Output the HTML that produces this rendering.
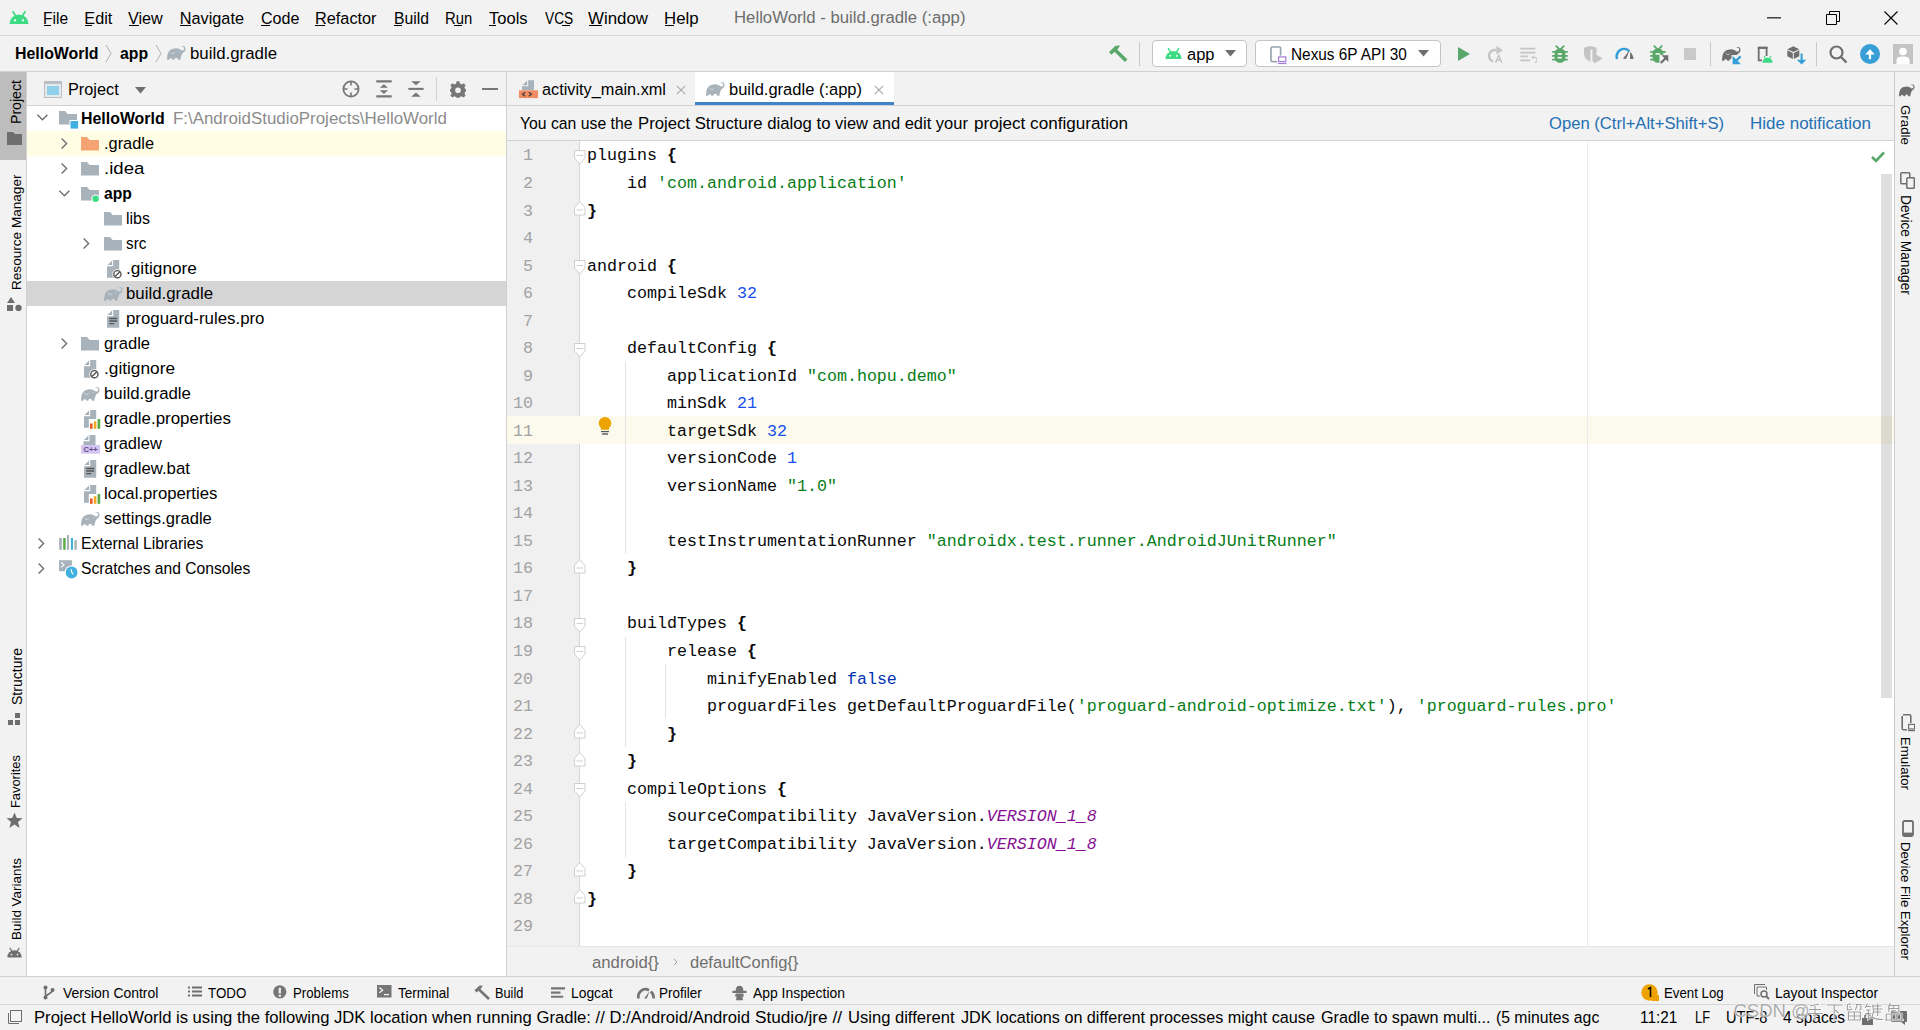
<!DOCTYPE html><html><head><meta charset="utf-8"><style>
html,body{margin:0;padding:0;}
body{width:1920px;height:1030px;overflow:hidden;position:relative;background:#f2f2f2;font-family:"Liberation Sans",sans-serif;}
.t{position:absolute;white-space:nowrap;line-height:1;}
.c{position:absolute;left:587px;white-space:pre;font-family:"Liberation Mono",monospace;font-size:16.67px;line-height:20px;color:#080808;}
.s{color:#067d17}.n{color:#1750eb}.k{color:#0033b3}.i{color:#871094;font-style:italic}.b{font-weight:bold}
.ln{position:absolute;left:493px;width:40px;text-align:right;font-family:"Liberation Mono",monospace;font-size:16.67px;line-height:20px;color:#a2a2a2;}
.u{position:absolute;height:1px;background:#000;}
</style></head><body>
<svg style="position:absolute;left:9px;top:11px;" width="20" height="13" viewBox="0 0 20 13"><path d="M0.5 13 A9.5 9.5 0 0 1 19.5 13 Z" fill="#3ddc84"/><path d="M4 0.8 L6.6 5 M16 0.8 L13.4 5" stroke="#3ddc84" stroke-width="1.7" stroke-linecap="round"/><circle cx="6" cy="9.3" r="1.15" fill="#fff"/><circle cx="14" cy="9.3" r="1.15" fill="#fff"/></svg>
<div class="t" style="left:43.30px;top:10px;font-size:16.25px;color:#000;transform:scaleX(0.9569);transform-origin:0 0;">File</div>
<div class="t" style="left:84.30px;top:10px;font-size:16.25px;color:#000;">Edit</div>
<div class="t" style="left:128.30px;top:10px;font-size:16.25px;color:#000;transform:scaleX(0.9964);transform-origin:0 0;">View</div>
<div class="t" style="left:179.80px;top:10px;font-size:16.25px;color:#000;">Navigate</div>
<div class="t" style="left:260.55px;top:10px;font-size:16.25px;color:#000;transform:scaleX(0.9904);transform-origin:0 0;">Code</div>
<div class="t" style="left:314.70px;top:10px;font-size:16.25px;color:#000;transform:scaleX(1.0020);transform-origin:0 0;">Refactor</div>
<div class="t" style="left:393.70px;top:10px;font-size:16.25px;color:#000;transform:scaleX(0.9689);transform-origin:0 0;">Build</div>
<div class="t" style="left:444.90px;top:10px;font-size:16.25px;color:#000;transform:scaleX(0.9126);transform-origin:0 0;">Run</div>
<div class="t" style="left:488.80px;top:10px;font-size:16.25px;color:#000;transform:scaleX(1.0165);transform-origin:0 0;">Tools</div>
<div class="t" style="left:544.80px;top:10px;font-size:16.25px;color:#000;transform:scaleX(0.8464);transform-origin:0 0;">VCS</div>
<div class="t" style="left:588.30px;top:10px;font-size:16.25px;color:#000;transform:scaleX(1.0367);transform-origin:0 0;">Window</div>
<div class="t" style="left:664.30px;top:10px;font-size:16.25px;color:#000;transform:scaleX(1.0337);transform-origin:0 0;">Help</div>
<div style="position:absolute;left:44px;top:25px;width:7px;height:1px;background:#000"></div>
<div style="position:absolute;left:85px;top:25px;width:7px;height:1px;background:#000"></div>
<div style="position:absolute;left:129px;top:25px;width:10px;height:1px;background:#000"></div>
<div style="position:absolute;left:180px;top:25px;width:11px;height:1px;background:#000"></div>
<div style="position:absolute;left:261px;top:25px;width:9px;height:1px;background:#000"></div>
<div style="position:absolute;left:315px;top:25px;width:10px;height:1px;background:#000"></div>
<div style="position:absolute;left:394px;top:25px;width:8px;height:1px;background:#000"></div>
<div style="position:absolute;left:454px;top:25px;width:8px;height:1px;background:#000"></div>
<div style="position:absolute;left:489px;top:25px;width:7px;height:1px;background:#000"></div>
<div style="position:absolute;left:562px;top:25px;width:8px;height:1px;background:#000"></div>
<div style="position:absolute;left:589px;top:25px;width:13px;height:1px;background:#000"></div>
<div style="position:absolute;left:665px;top:25px;width:9px;height:1px;background:#000"></div>
<div class="t" style="left:733.80px;top:9px;font-size:16.25px;color:#6d6d6d;transform:scaleX(1.0306);transform-origin:0 0;">HelloWorld - build.gradle (:app)</div>
<svg style="position:absolute;left:1767px;top:17px;" width="14" height="2" viewBox="0 0 14 2"><rect y="0.3" width="14" height="1.1" fill="#000"/></svg>
<svg style="position:absolute;left:1826px;top:11px;" width="14" height="14" viewBox="0 0 14 14"><path d="M0.5 3.5 H10.5 V13.5 H0.5 Z M3.5 3.5 V0.5 H13.5 V10.5 H10.5" stroke="#000" stroke-width="1" fill="none"/></svg>
<svg style="position:absolute;left:1884px;top:11px;" width="14" height="14" viewBox="0 0 14 14"><path d="M0.5 0.5 L13.5 13.5 M13.5 0.5 L0.5 13.5" stroke="#000" stroke-width="1.1"/></svg>
<div style="position:absolute;left:0px;top:35px;width:1920px;height:1px;background:#d9d9d9"></div>
<div class="t" style="left:14.90px;top:45px;font-size:16.25px;color:#000;font-weight:bold;transform:scaleX(0.9778);transform-origin:0 0;">HelloWorld</div>
<svg style="position:absolute;left:105px;top:44px;" width="7" height="19" viewBox="0 0 7 19"><path d="M1 1 L6 9.5 L1 18" stroke="#b0b0b0" stroke-width="1" fill="none"/></svg>
<div class="t" style="left:119.60px;top:45px;font-size:16.25px;color:#000;font-weight:bold;transform:scaleX(0.9732);transform-origin:0 0;">app</div>
<svg style="position:absolute;left:155px;top:44px;" width="7" height="19" viewBox="0 0 7 19"><path d="M1 1 L6 9.5 L1 18" stroke="#b0b0b0" stroke-width="1" fill="none"/></svg>
<svg style="position:absolute;left:167px;top:46px;" width="19" height="14" viewBox="0 0 19 14"><path d="M0.1 13.8 C0 10.5 0.6 7 2.2 5 C3.8 3 6.5 2.2 9.3 2.2 C11.5 2.2 13 3.2 14.4 4.3 C15.3 4.9 16.6 4.6 17.1 3.3 C17.5 2 16.6 0.6 15.2 0.6 C14.5 0.6 14 0.9 13.6 1.3 C13.9 0.5 15 -0.1 16.2 0 C17.6 0.1 18.6 1.4 18.5 3.2 C18.4 5 16.8 6.4 15.4 7.3 C14.5 8.5 13.7 11 13.4 13.8 H11.1 C10.9 12.6 10.1 11.8 9.1 11.8 C8.1 11.8 7.5 12.6 7.3 13.8 H5.5 C5.3 12.8 4.6 12.2 3.8 12.2 C3 12.2 2.2 12.8 2 13.8 Z" fill="#a7b2ba"/><path d="M3.6 5.6 C4.2 7 5.2 7.6 6.3 7.6 C7 7.6 7.5 7.2 7.9 6.3" stroke="#fff" stroke-width="0.9" fill="none" opacity="0.55"/><circle cx="12.3" cy="5.6" r="0.6" fill="#fff" opacity="0.4"/></svg>
<div class="t" style="left:189.90px;top:45px;font-size:16.25px;color:#000;transform:scaleX(1.0357);transform-origin:0 0;">build.gradle</div>
<svg style="position:absolute;left:1108px;top:44px;" width="21" height="20" viewBox="0 0 21 20"><path d="M7 5.8 L18.2 16.8" stroke="#59a869" stroke-width="3.6"/><path d="M1 8.1 L7.6 1.8 L12.2 1.4 L10.1 4.5 L3.4 10.8 Z" fill="#59a869"/></svg>
<div style="position:absolute;left:1139px;top:42px;width:1px;height:24px;background:#c9c9c9"></div>
<div style="position:absolute;left:1152px;top:40px;width:93px;height:25px;background:#fff;border:1px solid #c4c4c4;border-radius:4px"></div>
<svg style="position:absolute;left:1165px;top:48px;" width="17" height="11" viewBox="0 0 20 13"><path d="M0.5 13 A9.5 9.5 0 0 1 19.5 13 Z" fill="#3ddc84"/><path d="M4 0.8 L6.6 5 M16 0.8 L13.4 5" stroke="#3ddc84" stroke-width="1.7" stroke-linecap="round"/><circle cx="6" cy="9.3" r="1.15" fill="#fff"/><circle cx="14" cy="9.3" r="1.15" fill="#fff"/></svg>
<div class="t" style="left:1187.30px;top:46px;font-size:16.25px;color:#000;transform:scaleX(1.0138);transform-origin:0 0;">app</div>
<svg style="position:absolute;left:1225px;top:50px;" width="11" height="7" viewBox="0 0 11 7"><path d="M0 0 H11 L5.5 6.5 Z" fill="#6e6e6e"/></svg>
<div style="position:absolute;left:1255px;top:40px;width:184px;height:25px;background:#fff;border:1px solid #c4c4c4;border-radius:4px"></div>
<svg style="position:absolute;left:1270px;top:46px;" width="17" height="19" viewBox="0 0 17 19"><rect x="1" y="1" width="9.6" height="14.6" rx="1.2" stroke="#9aa7b0" stroke-width="1.7" fill="none"/><rect x="7.2" y="9.6" width="10" height="9" fill="#fff"/><rect x="8.6" y="10.9" width="7.2" height="4.6" stroke="#a77ed8" stroke-width="1.2" fill="none"/><rect x="7.8" y="16.8" width="8.8" height="1.3" fill="#a77ed8"/></svg>
<div class="t" style="left:1291.05px;top:46px;font-size:16.25px;color:#000;transform:scaleX(0.9449);transform-origin:0 0;">Nexus 6P API 30</div>
<svg style="position:absolute;left:1418px;top:50px;" width="11" height="7" viewBox="0 0 11 7"><path d="M0 0 H11 L5.5 6.5 Z" fill="#6e6e6e"/></svg>
<svg style="position:absolute;left:1457px;top:46px;" width="14" height="16" viewBox="0 0 14 16"><path d="M1 1 L13 8 L1 15 Z" fill="#59a869"/></svg>
<svg style="position:absolute;left:1486px;top:45px;" width="18" height="19" viewBox="0 0 18 19"><path d="M10.5 5.2 A5.6 5.6 0 1 0 7.2 16.4" stroke="#c4c4c4" stroke-width="2.4" fill="none"/><path d="M10.4 0.8 L16.8 5.2 L10.4 9.6 Z" fill="#c4c4c4"/><path d="M9.6 17.8 L12.7 10.4 L15.8 17.8 M10.8 15.2 H14.6" stroke="#c4c4c4" stroke-width="1.5" fill="none"/></svg>
<svg style="position:absolute;left:1520px;top:46px;" width="17" height="18" viewBox="0 0 17 18"><path d="M0.4 2.6 H15.3 M0.4 6.6 H15.3 M0.4 10.4 H7.9 M0.4 14.3 H10.2" stroke="#c4c4c4" stroke-width="1.8"/><path d="M13.4 11.3 H14.6 A2.6 2.6 0 0 1 14.6 16.5" stroke="#c4c4c4" stroke-width="1.3" fill="none"/><path d="M11.2 11.3 L13.6 9.4 V13.2 Z" fill="#c4c4c4"/></svg>
<svg style="position:absolute;left:1552px;top:45px;" width="16" height="19" viewBox="0 0 16 19"><path d="M8 3.6 C11.5 3.6 13.4 6 13.4 9 V12.5 C13.4 15.5 11.2 17.8 8 17.8 C4.8 17.8 2.6 15.5 2.6 12.5 V9 C2.6 6 4.5 3.6 8 3.6 Z" fill="#59a869"/><path d="M0.9 6.8 H15.1 M0.9 10.9 H15.1 M0.9 14.6 H15.1 M4.3 1.2 L7 3.9 M11.7 1.2 L9 3.9" stroke="#59a869" stroke-width="1.8" stroke-linecap="round"/><rect x="5.6" y="8.2" width="4.4" height="1.5" fill="#fff"/><rect x="5.6" y="11.9" width="4.4" height="1.5" fill="#fff"/></svg>
<svg style="position:absolute;left:1584px;top:46px;" width="19" height="18" viewBox="0 0 19 18"><path d="M6 0.3 C8 0.3 10.5 1 12.5 1.8 V8 L10 9.2 V15.5 C8.5 15.5 7 15.4 6 15.5 C2.5 14 0 11 0 7.5 V1.8 C2 1 4 0.3 6 0.3 Z" fill="#c4c4c4"/><rect x="6.4" y="3.6" width="2" height="12" fill="#f2f2f2"/><path d="M10 7.2 L18.7 12.5 L10 17.7 Z" fill="#c4c4c4"/></svg>
<svg style="position:absolute;left:1615px;top:47px;" width="20" height="13" viewBox="0 0 20 13"><path d="M2.2 12 A7.3 7.3 0 0 1 14.3 4.3" stroke="#389fd6" stroke-width="2.6" fill="none"/><path d="M8 11.5 L14.9 2.8 L11 12 Z" fill="#6e6e6e"/><path d="M15.2 4.7 C17 6.5 18.2 9 18.5 12 H15 Z" fill="#6e6e6e"/></svg>
<svg style="position:absolute;left:1650px;top:45px;" width="19" height="19" viewBox="0 0 19 19"><path d="M8 3.6 C11.5 3.6 13.4 6 13.4 9 V12.5 C13.4 15.5 11.2 17.8 8 17.8 C4.8 17.8 2.6 15.5 2.6 12.5 V9 C2.6 6 4.5 3.6 8 3.6 Z" fill="#59a869"/><path d="M0.9 6.8 H15.1 M0.9 10.9 H15.1 M0.9 14.6 H15.1 M4.3 1.2 L7 3.9 M11.7 1.2 L9 3.9" stroke="#59a869" stroke-width="1.8" stroke-linecap="round"/><rect x="5.6" y="8.2" width="4.4" height="1.5" fill="#fff"/><path d="M9.5 9.8 H19 V19 H9.5 Z" fill="#f2f2f2"/><path d="M10.8 18 L16.6 12.2" stroke="#6e6e6e" stroke-width="2.2"/><path d="M11.5 10.2 H18.3 V17 Z" fill="#6e6e6e"/></svg>
<div style="position:absolute;left:1684px;top:48px;width:12px;height:12px;background:#c9c9c9"></div>
<div style="position:absolute;left:1710px;top:42px;width:1px;height:24px;background:#c9c9c9"></div>
<svg style="position:absolute;left:1721.5px;top:47px;" width="20" height="18" viewBox="0 0 20 18"><path d="M0.1 13.8 C0 10.5 0.6 7 2.2 5 C3.8 3 6.5 2.2 9.3 2.2 C11.5 2.2 13 3.2 14.4 4.3 C15.3 4.9 16.6 4.6 17.1 3.3 C17.5 2 16.6 0.6 15.2 0.6 C14.5 0.6 14 0.9 13.6 1.3 C13.9 0.5 15 -0.1 16.2 0 C17.6 0.1 18.6 1.4 18.5 3.2 C18.4 5 16.8 6.4 15.4 7.3 C14.5 8.5 13.7 11 13.4 13.8 H11.1 C10.9 12.6 10.1 11.8 9.1 11.8 C8.1 11.8 7.5 12.6 7.3 13.8 H5.5 C5.3 12.8 4.6 12.2 3.8 12.2 C3 12.2 2.2 12.8 2 13.8 Z" fill="#6e6e6e"/><path d="M3.6 5.6 C4.2 7 5.2 7.6 6.3 7.6 C7 7.6 7.5 7.2 7.9 6.3" stroke="#fff" stroke-width="0.9" fill="none" opacity="0.6"/><path d="M9.5 8 L20 8 L20 18 L9.5 18 Z" fill="#f2f2f2"/><path d="M18.6 9.4 L13.5 14.3" stroke="#389fd6" stroke-width="2.3"/><path d="M10.6 8.8 V17.2 H19 Z" fill="#389fd6"/></svg>
<svg style="position:absolute;left:1757px;top:46px;" width="17" height="18" viewBox="0 0 17 18"><path d="M1.7 1.8 H9.6 V10 M1.7 1.8 V14.4 H5" stroke="#6e6e6e" stroke-width="1.8" fill="none"/><rect x="0.8" y="0.6" width="9.7" height="2.2" fill="#6e6e6e"/><path d="M5.4 16.8 A5 5 0 0 1 15.6 16.8 Z" fill="#3ddc84"/><path d="M7.3 10.4 L8.5 12.6 M13.7 10.4 L12.5 12.6" stroke="#3ddc84" stroke-width="1.1" stroke-linecap="round"/></svg>
<svg style="position:absolute;left:1786.5px;top:45.5px;" width="20" height="19" viewBox="0 0 20 19"><path d="M6.3 0.3 L12.3 3.2 L6.3 6 L0.3 3.2 Z" fill="#6e6e6e"/><path d="M0.3 4.3 L5.8 7 V13 L0.3 10.3 Z" fill="#6e6e6e"/><path d="M6.8 7 L12.3 4.3 V10.3 L6.8 13 Z" fill="#6e6e6e"/><path d="M14.6 7.5 V14.5" stroke="#389fd6" stroke-width="2.1"/><path d="M9.8 13.8 H19.4 L14.6 18.5 Z" fill="#389fd6"/></svg>
<div style="position:absolute;left:1816px;top:42px;width:1px;height:24px;background:#c9c9c9"></div>
<svg style="position:absolute;left:1829px;top:45px;" width="19" height="19" viewBox="0 0 19 19"><circle cx="7.5" cy="7.5" r="6" stroke="#6e6e6e" stroke-width="2.2" fill="none"/><path d="M12 12 L17.5 17.5" stroke="#6e6e6e" stroke-width="2.4"/></svg>
<svg style="position:absolute;left:1860px;top:44px;" width="20" height="20" viewBox="0 0 20 20"><circle cx="10" cy="10" r="10" fill="#389fd6"/><path d="M10 9.5 V15.2" stroke="#fff" stroke-width="2.2"/><path d="M5.2 10.5 L10 5.2 L14.8 10.5 Z" fill="#fff"/></svg>
<svg style="position:absolute;left:1893px;top:44px;" width="20" height="20" viewBox="0 0 20 20"><rect width="20" height="20" fill="#c4c4c4"/><circle cx="10" cy="7.5" r="3.8" fill="#fff"/><path d="M3.5 20 V16 C3.5 13.5 6 12.5 10 12.5 C14 12.5 16.5 13.5 16.5 16 V20 Z" fill="#fff"/></svg>
<div style="position:absolute;left:0px;top:71px;width:1920px;height:1px;background:#d1d1d1"></div>
<div style="position:absolute;left:26px;top:72px;width:1px;height:904px;background:#d1d1d1"></div>
<div style="position:absolute;left:0px;top:72px;width:26px;height:88px;background:#bdbdbd"></div>
<div class="t" style="left:9.43px;top:124.00px;font-size:14.14px;color:#000;transform:rotate(-90deg);transform-origin:0 0">Project</div>
<svg style="position:absolute;left:7px;top:132px;" width="15" height="13" viewBox="0 0 15 13"><path d="M0 0 H6 L8 2 H15 V13 H0 Z" fill="#6e6e6e"/></svg>
<div class="t" style="left:9.89px;top:289.60px;font-size:13.59px;color:#000;transform:rotate(-90deg);transform-origin:0 0">Resource Manager</div>
<svg style="position:absolute;left:7px;top:297px;" width="15" height="14" viewBox="0 0 15 14"><path d="M4 0 L8 6 H0 Z" fill="#6e6e6e"/><rect x="0" y="8" width="6" height="6" fill="#6e6e6e"/><circle cx="11.5" cy="11" r="3.2" fill="#6e6e6e"/></svg>
<div class="t" style="left:9.51px;top:705.00px;font-size:14.05px;color:#000;transform:rotate(-90deg);transform-origin:0 0">Structure</div>
<svg style="position:absolute;left:8px;top:713px;" width="13" height="13" viewBox="0 0 13 13"><rect x="0" y="7" width="5" height="5" fill="#6e6e6e"/><rect x="7" y="7" width="5" height="5" fill="#6e6e6e"/><rect x="7" y="0" width="5" height="5" fill="#6e6e6e"/></svg>
<div class="t" style="left:10.49px;top:808.00px;font-size:12.89px;color:#000;transform:rotate(-90deg);transform-origin:0 0">Favorites</div>
<svg style="position:absolute;left:6px;top:812px;" width="17" height="17" viewBox="0 0 17 17"><path d="M8.5 0.5 L10.8 6 L16.5 6.3 L12 10 L13.6 16 L8.5 12.6 L3.4 16 L5 10 L0.5 6.3 L6.2 6 Z" fill="#6e6e6e"/></svg>
<div class="t" style="left:10.01px;top:940.00px;font-size:13.45px;color:#000;transform:rotate(-90deg);transform-origin:0 0">Build Variants</div>
<svg style="position:absolute;left:7px;top:947px;" width="15" height="11" viewBox="0 0 20 13"><path d="M0.5 13 A9.5 9.5 0 0 1 19.5 13 Z" fill="#6e6e6e"/><path d="M4 0.8 L6.6 5 M16 0.8 L13.4 5" stroke="#6e6e6e" stroke-width="1.7" stroke-linecap="round"/><circle cx="6" cy="9.3" r="1.15" fill="#f2f2f2"/><circle cx="14" cy="9.3" r="1.15" fill="#f2f2f2"/></svg>
<div style="position:absolute;left:27px;top:105px;width:479px;height:1px;background:#d1d1d1"></div>
<div style="position:absolute;left:506px;top:72px;width:1px;height:904px;background:#d1d1d1"></div>
<svg style="position:absolute;left:44px;top:81px;" width="18" height="17" viewBox="0 0 18 17"><rect x="0.5" y="0.5" width="17" height="16" fill="#e6e9eb" stroke="#b8c0c6"/><rect x="0.5" y="0.5" width="17" height="2.5" fill="#b8c0c6"/><rect x="3" y="5" width="12" height="9" fill="#8fd1ea"/></svg>
<div class="t" style="left:68.05px;top:81px;font-size:16.25px;color:#000;transform:scaleX(1.0025);transform-origin:0 0;">Project</div>
<svg style="position:absolute;left:135px;top:87px;" width="11" height="7" viewBox="0 0 11 7"><path d="M0 0 H11 L5.5 6.5 Z" fill="#6e6e6e"/></svg>
<svg style="position:absolute;left:342px;top:80px;" width="18" height="18" viewBox="0 0 18 18"><circle cx="9" cy="9" r="7.6" stroke="#777" stroke-width="1.8" fill="none"/><path d="M9 1.5 V5.5 M9 12.5 V16.5 M1.5 9 H5.5 M12.5 9 H16.5" stroke="#777" stroke-width="1.6"/></svg>
<svg style="position:absolute;left:376px;top:80px;" width="16" height="18" viewBox="0 0 16 18"><path d="M0.3 1.4 H15.7 M0.3 16.4 H15.7" stroke="#777" stroke-width="2.4"/><path d="M7.9 4.2 L12 7.7 H3.8 Z M7.9 14 L12 10.3 H3.8 Z" fill="#777"/></svg>
<svg style="position:absolute;left:408px;top:80px;" width="16" height="18" viewBox="0 0 16 18"><path d="M0.4 8.9 H15.6" stroke="#777" stroke-width="2.1"/><path d="M3.2 1.2 H12.7 L8 5.3 Z M3.2 16.8 H12.7 L8 12.4 Z" fill="#777"/></svg>
<div style="position:absolute;left:436px;top:77px;width:1px;height:24px;background:#d1d1d1"></div>
<svg style="position:absolute;left:450px;top:80.5px;" width="16" height="17" viewBox="0 0 16 17"><path d="M6.6 0.3 H9.4 L9.9 2.6 L11.6 3.4 L13.6 2.2 L15.6 4.2 L14.4 6.2 L15.2 7.9 L16 8.2 V10.4 L15.2 10.7 L14.4 12.4 L15.6 14.4 L13.6 16.4 L11.6 15.2 L9.9 16 L9.4 16.8 H6.6 L6.1 16 L4.4 15.2 L2.4 16.4 L0.4 14.4 L1.6 12.4 L0.8 10.7 L0 10.4 V8.2 L0.8 7.9 L1.6 6.2 L0.4 4.2 L2.4 2.2 L4.4 3.4 L6.1 2.6 Z" fill="#777"/><circle cx="8" cy="9.3" r="2.8" fill="#f2f2f2"/></svg>
<div style="position:absolute;left:482px;top:87.5px;width:16px;height:2.6px;background:#777"></div>
<div style="position:absolute;left:27px;top:106px;width:479px;height:870px;background:#fff"></div>
<div style="position:absolute;left:27px;top:131px;width:479px;height:25px;background:#fffee4"></div>
<div style="position:absolute;left:27px;top:281px;width:479px;height:25px;background:#d5d5d5"></div>
<svg style="position:absolute;left:37px;top:114px;" width="12" height="8" viewBox="0 0 12 8"><path d="M0.4 0.7 L5.4 5.7 L10.4 0.7" stroke="#6e6e6e" stroke-width="1.4" fill="none"/></svg>
<svg style="position:absolute;left:59px;top:111.3px;" width="21" height="19" viewBox="0 0 21 19"><path d="M0 0 H6 L8.7 2.9 H18 V13.4 H0 Z" fill="#a7b2ba"/><rect x="10.5" y="9" width="9.5" height="9.5" fill="#fff"/><rect x="11.5" y="10" width="7.6" height="7.6" fill="#3fb0e0"/></svg>
<div class="t" style="left:80.90px;top:110px;font-size:16.25px;color:#000;font-weight:bold;transform:scaleX(0.9789);transform-origin:0 0;">HelloWorld</div>
<div class="t" style="left:172.70px;top:110px;font-size:16.25px;color:#8c8c8c;transform:scaleX(1.0396);transform-origin:0 0;">F:\AndroidStudioProjects\HelloWorld</div>
<svg style="position:absolute;left:61px;top:137.8px;" width="8" height="12" viewBox="0 0 8 12"><path d="M0.6 0.5 L5.6 5.5 L0.6 10.5" stroke="#6e6e6e" stroke-width="1.4" fill="none"/></svg>
<svg style="position:absolute;left:81px;top:136.6px;" width="21" height="19" viewBox="0 0 21 19"><path d="M0 0 H6 L8.7 2.9 H18 V13.4 H0 Z" fill="#f5a372"/></svg>
<div class="t" style="left:103.80px;top:135px;font-size:16.25px;color:#000;transform:scaleX(1.0076);transform-origin:0 0;">.gradle</div>
<svg style="position:absolute;left:61px;top:162.8px;" width="8" height="12" viewBox="0 0 8 12"><path d="M0.6 0.5 L5.6 5.5 L0.6 10.5" stroke="#6e6e6e" stroke-width="1.4" fill="none"/></svg>
<svg style="position:absolute;left:81px;top:161.6px;" width="21" height="19" viewBox="0 0 21 19"><path d="M0 0 H6 L8.7 2.9 H18 V13.4 H0 Z" fill="#a7b2ba"/></svg>
<div class="t" style="left:103.80px;top:160px;font-size:16.25px;color:#000;transform:scaleX(1.1449);transform-origin:0 0;">.idea</div>
<svg style="position:absolute;left:59px;top:190px;" width="12" height="8" viewBox="0 0 12 8"><path d="M0.4 0.7 L5.4 5.7 L10.4 0.7" stroke="#6e6e6e" stroke-width="1.4" fill="none"/></svg>
<svg style="position:absolute;left:81px;top:187px;" width="21" height="19" viewBox="0 0 21 19"><path d="M0 0 H6 L8.7 2.9 H18 V13.4 H0 Z" fill="#a7b2ba"/><circle cx="14.6" cy="11.7" r="4.3" fill="#fff"/><circle cx="14.6" cy="11.7" r="3.2" fill="#3ddc84"/></svg>
<div class="t" style="left:103.80px;top:185px;font-size:16.25px;color:#000;font-weight:bold;transform:scaleX(0.9662);transform-origin:0 0;">app</div>
<svg style="position:absolute;left:104px;top:211.6px;" width="21" height="19" viewBox="0 0 21 19"><path d="M0 0 H6 L8.7 2.9 H18 V13.4 H0 Z" fill="#a7b2ba"/></svg>
<div class="t" style="left:125.90px;top:210px;font-size:16.25px;color:#000;transform:scaleX(0.9846);transform-origin:0 0;">libs</div>
<svg style="position:absolute;left:83px;top:237.8px;" width="8" height="12" viewBox="0 0 8 12"><path d="M0.6 0.5 L5.6 5.5 L0.6 10.5" stroke="#6e6e6e" stroke-width="1.4" fill="none"/></svg>
<svg style="position:absolute;left:104px;top:236.6px;" width="21" height="19" viewBox="0 0 21 19"><path d="M0 0 H6 L8.7 2.9 H18 V13.4 H0 Z" fill="#a7b2ba"/></svg>
<div class="t" style="left:125.90px;top:235px;font-size:16.25px;color:#000;transform:scaleX(0.9387);transform-origin:0 0;">src</div>
<svg style="position:absolute;left:107px;top:260.2px;" width="16" height="20" viewBox="0 0 16 20"><path d="M6.2 0 H12.2 V17.7 H0 V6.2 H6.2 Z" fill="#a7b2ba"/><path d="M5.1 0.4 V5.1 H0.4 Z" fill="#a7b2ba"/><circle cx="10.4" cy="14.2" r="5" fill="#fff"/><circle cx="10.4" cy="14.2" r="3.6" stroke="#555" stroke-width="1.4" fill="none"/><path d="M8 16.6 L12.8 11.8" stroke="#555" stroke-width="1.4"/></svg>
<div class="t" style="left:125.90px;top:260px;font-size:16.25px;color:#000;transform:scaleX(1.0602);transform-origin:0 0;">.gitignore</div>
<svg style="position:absolute;left:103.5px;top:287px;" width="19" height="14" viewBox="0 0 19 14"><path d="M0.1 13.8 C0 10.5 0.6 7 2.2 5 C3.8 3 6.5 2.2 9.3 2.2 C11.5 2.2 13 3.2 14.4 4.3 C15.3 4.9 16.6 4.6 17.1 3.3 C17.5 2 16.6 0.6 15.2 0.6 C14.5 0.6 14 0.9 13.6 1.3 C13.9 0.5 15 -0.1 16.2 0 C17.6 0.1 18.6 1.4 18.5 3.2 C18.4 5 16.8 6.4 15.4 7.3 C14.5 8.5 13.7 11 13.4 13.8 H11.1 C10.9 12.6 10.1 11.8 9.1 11.8 C8.1 11.8 7.5 12.6 7.3 13.8 H5.5 C5.3 12.8 4.6 12.2 3.8 12.2 C3 12.2 2.2 12.8 2 13.8 Z" fill="#a7b2ba"/><path d="M3.6 5.6 C4.2 7 5.2 7.6 6.3 7.6 C7 7.6 7.5 7.2 7.9 6.3" stroke="#fff" stroke-width="0.9" fill="none" opacity="0.55"/><circle cx="12.3" cy="5.6" r="0.6" fill="#fff" opacity="0.4"/></svg>
<div class="t" style="left:125.90px;top:285px;font-size:16.25px;color:#000;transform:scaleX(1.0357);transform-origin:0 0;">build.gradle</div>
<svg style="position:absolute;left:107px;top:310px;" width="13" height="18" viewBox="0 0 13 18"><path d="M6.2 0 H12.2 V17.7 H0 V6.2 H6.2 Z" fill="#a7b2ba"/><path d="M5.1 0.4 V5.1 H0.4 Z" fill="#a7b2ba"/><path d="M2.3 8.5 H10.2 M2.3 11 H10.2 M2.3 13.6 H7.2" stroke="#555" stroke-width="1.3"/></svg>
<div class="t" style="left:125.90px;top:310px;font-size:16.25px;color:#000;transform:scaleX(1.0357);transform-origin:0 0;">proguard-rules.pro</div>
<svg style="position:absolute;left:61px;top:337.8px;" width="8" height="12" viewBox="0 0 8 12"><path d="M0.6 0.5 L5.6 5.5 L0.6 10.5" stroke="#6e6e6e" stroke-width="1.4" fill="none"/></svg>
<svg style="position:absolute;left:81px;top:336.6px;" width="21" height="19" viewBox="0 0 21 19"><path d="M0 0 H6 L8.7 2.9 H18 V13.4 H0 Z" fill="#a7b2ba"/></svg>
<div class="t" style="left:103.90px;top:335px;font-size:16.25px;color:#000;transform:scaleX(1.0194);transform-origin:0 0;">gradle</div>
<svg style="position:absolute;left:84px;top:360.2px;" width="16" height="20" viewBox="0 0 16 20"><path d="M6.2 0 H12.2 V17.7 H0 V6.2 H6.2 Z" fill="#a7b2ba"/><path d="M5.1 0.4 V5.1 H0.4 Z" fill="#a7b2ba"/><circle cx="10.4" cy="14.2" r="5" fill="#fff"/><circle cx="10.4" cy="14.2" r="3.6" stroke="#555" stroke-width="1.4" fill="none"/><path d="M8 16.6 L12.8 11.8" stroke="#555" stroke-width="1.4"/></svg>
<div class="t" style="left:103.90px;top:360px;font-size:16.25px;color:#000;transform:scaleX(1.0617);transform-origin:0 0;">.gitignore</div>
<svg style="position:absolute;left:80.8px;top:387px;" width="19" height="14" viewBox="0 0 19 14"><path d="M0.1 13.8 C0 10.5 0.6 7 2.2 5 C3.8 3 6.5 2.2 9.3 2.2 C11.5 2.2 13 3.2 14.4 4.3 C15.3 4.9 16.6 4.6 17.1 3.3 C17.5 2 16.6 0.6 15.2 0.6 C14.5 0.6 14 0.9 13.6 1.3 C13.9 0.5 15 -0.1 16.2 0 C17.6 0.1 18.6 1.4 18.5 3.2 C18.4 5 16.8 6.4 15.4 7.3 C14.5 8.5 13.7 11 13.4 13.8 H11.1 C10.9 12.6 10.1 11.8 9.1 11.8 C8.1 11.8 7.5 12.6 7.3 13.8 H5.5 C5.3 12.8 4.6 12.2 3.8 12.2 C3 12.2 2.2 12.8 2 13.8 Z" fill="#a7b2ba"/><path d="M3.6 5.6 C4.2 7 5.2 7.6 6.3 7.6 C7 7.6 7.5 7.2 7.9 6.3" stroke="#fff" stroke-width="0.9" fill="none" opacity="0.55"/><circle cx="12.3" cy="5.6" r="0.6" fill="#fff" opacity="0.4"/></svg>
<div class="t" style="left:103.90px;top:385px;font-size:16.25px;color:#000;transform:scaleX(1.0345);transform-origin:0 0;">build.gradle</div>
<svg style="position:absolute;left:84px;top:410.3px;" width="17" height="19" viewBox="0 0 17 19"><path d="M6.2 0 H12.2 V17.7 H0 V6.2 H6.2 Z" fill="#a7b2ba"/><path d="M5.1 0.4 V5.1 H0.4 Z" fill="#a7b2ba"/><rect x="4.8" y="9" width="13" height="10" fill="#fff"/><rect x="6" y="13.5" width="2.6" height="5.3" fill="#e8582a"/><rect x="9.8" y="11.3" width="2.6" height="7.5" fill="#f5a623"/><rect x="13.6" y="9" width="2.6" height="9.8" fill="#59a848"/></svg>
<div class="t" style="left:103.90px;top:410px;font-size:16.25px;color:#000;transform:scaleX(1.0402);transform-origin:0 0;">gradle.properties</div>
<svg style="position:absolute;left:81.3px;top:435px;" width="19" height="19" viewBox="0 0 19 19"><path d="M8.5 0 H14.5 V10 H2.5 V6.2 H8.5 Z" fill="#a7b2ba"/><path d="M7.4 0.4 V5.1 H2.9 Z" fill="#a7b2ba"/><rect x="0" y="10" width="19" height="8.7" fill="#d5c5f0"/><text x="9.6" y="17" font-family="Liberation Sans" font-size="7.5" font-weight="bold" text-anchor="middle" fill="#5c4a88">C++</text></svg>
<div class="t" style="left:103.90px;top:435px;font-size:16.25px;color:#000;transform:scaleX(1.0158);transform-origin:0 0;">gradlew</div>
<svg style="position:absolute;left:84px;top:460px;" width="13" height="18" viewBox="0 0 13 18"><path d="M6.2 0 H12.2 V17.7 H0 V6.2 H6.2 Z" fill="#a7b2ba"/><path d="M5.1 0.4 V5.1 H0.4 Z" fill="#a7b2ba"/><path d="M2.3 8.5 H10.2 M2.3 11 H10.2 M2.3 13.6 H7.2" stroke="#555" stroke-width="1.3"/></svg>
<div class="t" style="left:103.90px;top:460px;font-size:16.25px;color:#000;transform:scaleX(1.0346);transform-origin:0 0;">gradlew.bat</div>
<svg style="position:absolute;left:84px;top:485.3px;" width="17" height="19" viewBox="0 0 17 19"><path d="M6.2 0 H12.2 V17.7 H0 V6.2 H6.2 Z" fill="#a7b2ba"/><path d="M5.1 0.4 V5.1 H0.4 Z" fill="#a7b2ba"/><rect x="4.8" y="9" width="13" height="10" fill="#fff"/><rect x="6" y="13.5" width="2.6" height="5.3" fill="#e8582a"/><rect x="9.8" y="11.3" width="2.6" height="7.5" fill="#f5a623"/><rect x="13.6" y="9" width="2.6" height="9.8" fill="#59a848"/></svg>
<div class="t" style="left:103.90px;top:485px;font-size:16.25px;color:#000;transform:scaleX(1.0286);transform-origin:0 0;">local.properties</div>
<svg style="position:absolute;left:80.8px;top:512px;" width="19" height="14" viewBox="0 0 19 14"><path d="M0.1 13.8 C0 10.5 0.6 7 2.2 5 C3.8 3 6.5 2.2 9.3 2.2 C11.5 2.2 13 3.2 14.4 4.3 C15.3 4.9 16.6 4.6 17.1 3.3 C17.5 2 16.6 0.6 15.2 0.6 C14.5 0.6 14 0.9 13.6 1.3 C13.9 0.5 15 -0.1 16.2 0 C17.6 0.1 18.6 1.4 18.5 3.2 C18.4 5 16.8 6.4 15.4 7.3 C14.5 8.5 13.7 11 13.4 13.8 H11.1 C10.9 12.6 10.1 11.8 9.1 11.8 C8.1 11.8 7.5 12.6 7.3 13.8 H5.5 C5.3 12.8 4.6 12.2 3.8 12.2 C3 12.2 2.2 12.8 2 13.8 Z" fill="#a7b2ba"/><path d="M3.6 5.6 C4.2 7 5.2 7.6 6.3 7.6 C7 7.6 7.5 7.2 7.9 6.3" stroke="#fff" stroke-width="0.9" fill="none" opacity="0.55"/><circle cx="12.3" cy="5.6" r="0.6" fill="#fff" opacity="0.4"/></svg>
<div class="t" style="left:103.90px;top:510px;font-size:16.25px;color:#000;transform:scaleX(1.0203);transform-origin:0 0;">settings.gradle</div>
<svg style="position:absolute;left:38px;top:537.8px;" width="8" height="12" viewBox="0 0 8 12"><path d="M0.6 0.5 L5.6 5.5 L0.6 10.5" stroke="#6e6e6e" stroke-width="1.4" fill="none"/></svg>
<svg style="position:absolute;left:59px;top:535px;" width="18" height="16" viewBox="0 0 18 16"><rect x="0.1" y="3" width="2.7" height="11.8" fill="#a7b2ba"/><rect x="4.2" y="3" width="2.4" height="11.8" fill="#59a848"/><rect x="7.9" y="0" width="2.1" height="14.8" fill="#a7b2ba"/><rect x="11.9" y="3" width="2.1" height="11.8" fill="#40b0de"/><rect x="15.4" y="5.2" width="2.4" height="9.6" fill="#a7b2ba"/></svg>
<div class="t" style="left:81.20px;top:535px;font-size:16.25px;color:#000;transform:scaleX(0.9684);transform-origin:0 0;">External Libraries</div>
<svg style="position:absolute;left:38px;top:562.8px;" width="8" height="12" viewBox="0 0 8 12"><path d="M0.6 0.5 L5.6 5.5 L0.6 10.5" stroke="#6e6e6e" stroke-width="1.4" fill="none"/></svg>
<svg style="position:absolute;left:59px;top:560px;" width="19" height="20" viewBox="0 0 19 20"><rect x="0" y="0.2" width="12.9" height="11" fill="#a7b2ba"/><path d="M2 2.2 L5 4.8 L2 7.4" stroke="#fff" stroke-width="1.1" fill="none"/><circle cx="12.6" cy="12.5" r="7" fill="#fff"/><circle cx="12.6" cy="12.5" r="5.9" fill="#40b0de"/><path d="M12.2 9.2 C12.2 11.5 12.8 13 14.2 14.4" stroke="#fff" stroke-width="1.3" fill="none"/></svg>
<div class="t" style="left:81.20px;top:560px;font-size:16.25px;color:#000;transform:scaleX(0.9615);transform-origin:0 0;">Scratches and Consoles</div>
<div style="position:absolute;left:695px;top:72px;width:199px;height:33px;background:#fff"></div>
<div style="position:absolute;left:695px;top:102px;width:199px;height:3px;background:#4083c9"></div>
<svg style="position:absolute;left:519px;top:78px;" width="20" height="21" viewBox="0 0 20 21"><path d="M9.2 2.2 H15 V12.2 H3 V8.2 H9.2 Z" fill="#a7b2ba"/><path d="M8.1 2.6 V7.2 H3.4 Z" fill="#a7b2ba"/><rect x="0" y="12.3" width="19" height="7.8" fill="#f08c62"/><path d="M6.2 14.2 L3.6 16.2 L6.2 18.2 M9.8 14.2 L12.4 16.2 L9.8 18.2" stroke="#3d3d3d" stroke-width="1.2" fill="none"/></svg>
<div class="t" style="left:542.30px;top:81px;font-size:16.25px;color:#000;transform:scaleX(1.0020);transform-origin:0 0;">activity_main.xml</div>
<svg style="position:absolute;left:676px;top:85px;" width="10" height="10" viewBox="0 0 10 10"><path d="M0.8 0.8 L9.2 9.2 M9.2 0.8 L0.8 9.2" stroke="#a8a8a8" stroke-width="1.1"/></svg>
<svg style="position:absolute;left:706px;top:82px;" width="19" height="14" viewBox="0 0 19 14"><path d="M0.1 13.8 C0 10.5 0.6 7 2.2 5 C3.8 3 6.5 2.2 9.3 2.2 C11.5 2.2 13 3.2 14.4 4.3 C15.3 4.9 16.6 4.6 17.1 3.3 C17.5 2 16.6 0.6 15.2 0.6 C14.5 0.6 14 0.9 13.6 1.3 C13.9 0.5 15 -0.1 16.2 0 C17.6 0.1 18.6 1.4 18.5 3.2 C18.4 5 16.8 6.4 15.4 7.3 C14.5 8.5 13.7 11 13.4 13.8 H11.1 C10.9 12.6 10.1 11.8 9.1 11.8 C8.1 11.8 7.5 12.6 7.3 13.8 H5.5 C5.3 12.8 4.6 12.2 3.8 12.2 C3 12.2 2.2 12.8 2 13.8 Z" fill="#a7b2ba"/><path d="M3.6 5.6 C4.2 7 5.2 7.6 6.3 7.6 C7 7.6 7.5 7.2 7.9 6.3" stroke="#fff" stroke-width="0.9" fill="none" opacity="0.55"/><circle cx="12.3" cy="5.6" r="0.6" fill="#fff" opacity="0.4"/></svg>
<div class="t" style="left:729.30px;top:81px;font-size:16.25px;color:#000;transform:scaleX(1.0153);transform-origin:0 0;">build.gradle (:app)</div>
<svg style="position:absolute;left:874px;top:85px;" width="10" height="10" viewBox="0 0 10 10"><path d="M0.8 0.8 L9.2 9.2 M9.2 0.8 L0.8 9.2" stroke="#a8a8a8" stroke-width="1.1"/></svg>
<div style="position:absolute;left:507px;top:105px;width:1387px;height:1px;background:#d1d1d1"></div>
<div style="position:absolute;left:507px;top:106px;width:1387px;height:34px;background:#f2f2f2"></div>
<div style="position:absolute;left:507px;top:140px;width:1387px;height:1px;background:#d1d1d1"></div>
<div class="t" style="left:520.10px;top:115px;font-size:16.25px;color:#000;transform:scaleX(0.9698);transform-origin:0 0;">You can use the</div>
<div class="t" style="left:637.60px;top:115px;font-size:16.25px;color:#000;transform:scaleX(1.0294);transform-origin:0 0;">Project Structure dialog to</div>
<div class="t" style="left:835.10px;top:115px;font-size:16.25px;color:#000;transform:scaleX(1.0145);transform-origin:0 0;">view and edit your</div>
<div class="t" style="left:973.50px;top:115px;font-size:16.25px;color:#000;transform:scaleX(1.0528);transform-origin:0 0;">project configuration</div>
<div class="t" style="left:1548.80px;top:115px;font-size:16.25px;color:#2470b3;transform:scaleX(1.0226);transform-origin:0 0;">Open (Ctrl+Alt+Shift+S)</div>
<div class="t" style="left:1750.05px;top:115px;font-size:16.25px;color:#2470b3;transform:scaleX(1.0465);transform-origin:0 0;">Hide notification</div>
<div style="position:absolute;left:507px;top:141px;width:1387px;height:805px;background:#fff"></div>
<div style="position:absolute;left:507px;top:141px;width:72px;height:805px;background:#f0f0f0"></div>
<div style="position:absolute;left:579px;top:141px;width:1px;height:805px;background:#d5d5d5"></div>
<div style="position:absolute;left:507px;top:416px;width:1387px;height:28px;background:#fcfaed"></div>
<div style="position:absolute;left:507px;top:416px;width:72px;height:28px;background:#fcfaed"></div>
<div style="position:absolute;left:1587px;top:141px;width:1px;height:805px;background:#ebebeb"></div>
<div style="position:absolute;left:1881px;top:174px;width:11px;height:524px;background:rgba(0,0,0,0.125)"></div>
<svg style="position:absolute;left:1871px;top:151px;" width="14" height="12" viewBox="0 0 14 12"><path d="M1 6 L5 10 L13 1.5" stroke="#59a869" stroke-width="2.6" fill="none"/></svg>
<div style="position:absolute;left:625px;top:361px;width:1px;height:193px;background:#e3e3e3"></div>
<div style="position:absolute;left:625px;top:637px;width:1px;height:110px;background:#e3e3e3"></div>
<div style="position:absolute;left:665px;top:664px;width:1px;height:55px;background:#e3e3e3"></div>
<div style="position:absolute;left:625px;top:802px;width:1px;height:55px;background:#e3e3e3"></div>
<div class="ln" style="top:146.46px">1</div>
<div class="c" style="top:146.46px">plugins <span class="b">{</span></div>
<div class="ln" style="top:173.99px">2</div>
<div class="c" style="top:173.99px">    id <span class="s">'com.android.application'</span></div>
<div class="ln" style="top:201.52px">3</div>
<div class="c" style="top:201.52px"><span class="b">}</span></div>
<div class="ln" style="top:229.05px">4</div>
<div class="ln" style="top:256.58px">5</div>
<div class="c" style="top:256.58px">android <span class="b">{</span></div>
<div class="ln" style="top:284.11px">6</div>
<div class="c" style="top:284.11px">    compileSdk <span class="n">32</span></div>
<div class="ln" style="top:311.64px">7</div>
<div class="ln" style="top:339.17px">8</div>
<div class="c" style="top:339.17px">    defaultConfig <span class="b">{</span></div>
<div class="ln" style="top:366.70px">9</div>
<div class="c" style="top:366.70px">        applicationId <span class="s">"com.hopu.demo"</span></div>
<div class="ln" style="top:394.23px">10</div>
<div class="c" style="top:394.23px">        minSdk <span class="n">21</span></div>
<div class="ln" style="top:421.76px">11</div>
<div class="c" style="top:421.76px">        targetSdk <span class="n">32</span></div>
<div class="ln" style="top:449.29px">12</div>
<div class="c" style="top:449.29px">        versionCode <span class="n">1</span></div>
<div class="ln" style="top:476.82px">13</div>
<div class="c" style="top:476.82px">        versionName <span class="s">"1.0"</span></div>
<div class="ln" style="top:504.35px">14</div>
<div class="ln" style="top:531.88px">15</div>
<div class="c" style="top:531.88px">        testInstrumentationRunner <span class="s">"androidx.test.runner.AndroidJUnitRunner"</span></div>
<div class="ln" style="top:559.41px">16</div>
<div class="c" style="top:559.41px">    <span class="b">}</span></div>
<div class="ln" style="top:586.94px">17</div>
<div class="ln" style="top:614.47px">18</div>
<div class="c" style="top:614.47px">    buildTypes <span class="b">{</span></div>
<div class="ln" style="top:642.00px">19</div>
<div class="c" style="top:642.00px">        release <span class="b">{</span></div>
<div class="ln" style="top:669.53px">20</div>
<div class="c" style="top:669.53px">            minifyEnabled <span class="k">false</span></div>
<div class="ln" style="top:697.06px">21</div>
<div class="c" style="top:697.06px">            proguardFiles getDefaultProguardFile(<span class="s">'proguard-android-optimize.txt'</span>), <span class="s">'proguard-rules.pro'</span></div>
<div class="ln" style="top:724.59px">22</div>
<div class="c" style="top:724.59px">        <span class="b">}</span></div>
<div class="ln" style="top:752.12px">23</div>
<div class="c" style="top:752.12px">    <span class="b">}</span></div>
<div class="ln" style="top:779.65px">24</div>
<div class="c" style="top:779.65px">    compileOptions <span class="b">{</span></div>
<div class="ln" style="top:807.18px">25</div>
<div class="c" style="top:807.18px">        sourceCompatibility JavaVersion.<span class="i">VERSION_1_8</span></div>
<div class="ln" style="top:834.71px">26</div>
<div class="c" style="top:834.71px">        targetCompatibility JavaVersion.<span class="i">VERSION_1_8</span></div>
<div class="ln" style="top:862.24px">27</div>
<div class="c" style="top:862.24px">    <span class="b">}</span></div>
<div class="ln" style="top:889.77px">28</div>
<div class="c" style="top:889.77px"><span class="b">}</span></div>
<div class="ln" style="top:917.30px">29</div>
<svg style="position:absolute;left:574px;top:150px;" width="12" height="15" viewBox="0 0 12 15"><path d="M0.5 0.5 H11 V8 L5.75 14 L0.5 8 Z" fill="#fff" stroke="#cfcfcf" stroke-width="1"/><path d="M2.5 5.5 H9" stroke="#cfcfcf" stroke-width="1"/></svg>
<svg style="position:absolute;left:574px;top:260px;" width="12" height="15" viewBox="0 0 12 15"><path d="M0.5 0.5 H11 V8 L5.75 14 L0.5 8 Z" fill="#fff" stroke="#cfcfcf" stroke-width="1"/><path d="M2.5 5.5 H9" stroke="#cfcfcf" stroke-width="1"/></svg>
<svg style="position:absolute;left:574px;top:343px;" width="12" height="15" viewBox="0 0 12 15"><path d="M0.5 0.5 H11 V8 L5.75 14 L0.5 8 Z" fill="#fff" stroke="#cfcfcf" stroke-width="1"/><path d="M2.5 5.5 H9" stroke="#cfcfcf" stroke-width="1"/></svg>
<svg style="position:absolute;left:574px;top:618px;" width="12" height="15" viewBox="0 0 12 15"><path d="M0.5 0.5 H11 V8 L5.75 14 L0.5 8 Z" fill="#fff" stroke="#cfcfcf" stroke-width="1"/><path d="M2.5 5.5 H9" stroke="#cfcfcf" stroke-width="1"/></svg>
<svg style="position:absolute;left:574px;top:646px;" width="12" height="15" viewBox="0 0 12 15"><path d="M0.5 0.5 H11 V8 L5.75 14 L0.5 8 Z" fill="#fff" stroke="#cfcfcf" stroke-width="1"/><path d="M2.5 5.5 H9" stroke="#cfcfcf" stroke-width="1"/></svg>
<svg style="position:absolute;left:574px;top:783px;" width="12" height="15" viewBox="0 0 12 15"><path d="M0.5 0.5 H11 V8 L5.75 14 L0.5 8 Z" fill="#fff" stroke="#cfcfcf" stroke-width="1"/><path d="M2.5 5.5 H9" stroke="#cfcfcf" stroke-width="1"/></svg>
<svg style="position:absolute;left:574px;top:201px;" width="12" height="15" viewBox="0 0 12 15"><path d="M0.5 14 H11 V6.5 L5.75 0.5 L0.5 6.5 Z" fill="#fff" stroke="#cfcfcf" stroke-width="1"/><path d="M2.5 9 H9" stroke="#cfcfcf" stroke-width="1"/></svg>
<svg style="position:absolute;left:574px;top:559px;" width="12" height="15" viewBox="0 0 12 15"><path d="M0.5 14 H11 V6.5 L5.75 0.5 L0.5 6.5 Z" fill="#fff" stroke="#cfcfcf" stroke-width="1"/><path d="M2.5 9 H9" stroke="#cfcfcf" stroke-width="1"/></svg>
<svg style="position:absolute;left:574px;top:724px;" width="12" height="15" viewBox="0 0 12 15"><path d="M0.5 14 H11 V6.5 L5.75 0.5 L0.5 6.5 Z" fill="#fff" stroke="#cfcfcf" stroke-width="1"/><path d="M2.5 9 H9" stroke="#cfcfcf" stroke-width="1"/></svg>
<svg style="position:absolute;left:574px;top:752px;" width="12" height="15" viewBox="0 0 12 15"><path d="M0.5 14 H11 V6.5 L5.75 0.5 L0.5 6.5 Z" fill="#fff" stroke="#cfcfcf" stroke-width="1"/><path d="M2.5 9 H9" stroke="#cfcfcf" stroke-width="1"/></svg>
<svg style="position:absolute;left:574px;top:862px;" width="12" height="15" viewBox="0 0 12 15"><path d="M0.5 14 H11 V6.5 L5.75 0.5 L0.5 6.5 Z" fill="#fff" stroke="#cfcfcf" stroke-width="1"/><path d="M2.5 9 H9" stroke="#cfcfcf" stroke-width="1"/></svg>
<svg style="position:absolute;left:574px;top:889px;" width="12" height="15" viewBox="0 0 12 15"><path d="M0.5 14 H11 V6.5 L5.75 0.5 L0.5 6.5 Z" fill="#fff" stroke="#cfcfcf" stroke-width="1"/><path d="M2.5 9 H9" stroke="#cfcfcf" stroke-width="1"/></svg>
<svg style="position:absolute;left:598px;top:416px;" width="14" height="20" viewBox="0 0 14 20"><circle cx="7" cy="7.2" r="6.2" fill="#eea400"/><path d="M2.8 10 H11.2 L11 13.7 H3 Z" fill="#eea400"/><rect x="3" y="15" width="8" height="1.2" fill="#555"/><rect x="4" y="17" width="6" height="2" fill="#8a8a8a"/></svg>
<div style="position:absolute;left:507px;top:946px;width:1387px;height:1px;background:#e6e6e6"></div>
<div style="position:absolute;left:507px;top:947px;width:1387px;height:29px;background:#f2f2f2"></div>
<div class="t" style="left:592.20px;top:954px;font-size:16.25px;color:#6f6f6f;transform:scaleX(1.0288);transform-origin:0 0;">android{}</div>
<svg style="position:absolute;left:673px;top:958px;" width="5" height="8" viewBox="0 0 5 8"><path d="M0.8 0.8 L4 4 L0.8 7.2" stroke="#a0a0a0" stroke-width="1" fill="none"/></svg>
<div class="t" style="left:689.90px;top:954px;font-size:16.25px;color:#6f6f6f;transform:scaleX(1.0166);transform-origin:0 0;">defaultConfig{}</div>
<div style="position:absolute;left:1894px;top:72px;width:1px;height:904px;background:#cbcbcb"></div>
<svg style="position:absolute;left:1899px;top:84px;" width="16" height="13" viewBox="0 0 19 14"><path d="M0.1 13.8 C0 10.5 0.6 7 2.2 5 C3.8 3 6.5 2.2 9.3 2.2 C11.5 2.2 13 3.2 14.4 4.3 C15.3 4.9 16.6 4.6 17.1 3.3 C17.5 2 16.6 0.6 15.2 0.6 C14.5 0.6 14 0.9 13.6 1.3 C13.9 0.5 15 -0.1 16.2 0 C17.6 0.1 18.6 1.4 18.5 3.2 C18.4 5 16.8 6.4 15.4 7.3 C14.5 8.5 13.7 11 13.4 13.8 H11.1 C10.9 12.6 10.1 11.8 9.1 11.8 C8.1 11.8 7.5 12.6 7.3 13.8 H5.5 C5.3 12.8 4.6 12.2 3.8 12.2 C3 12.2 2.2 12.8 2 13.8 Z" fill="#6e6e6e"/></svg>
<div class="t" style="left:1911.78px;top:105.00px;font-size:13.32px;color:#000;transform:rotate(90deg);transform-origin:0 0">Gradle</div>
<svg style="position:absolute;left:1900px;top:172px;" width="15" height="17" viewBox="0 0 15 17"><rect x="0.8" y="0.8" width="9" height="11" rx="1" stroke="#6e6e6e" stroke-width="1.5" fill="none"/><rect x="6" y="5" width="9" height="12" fill="#f2f2f2"/><rect x="6.8" y="5.8" width="7.5" height="10.5" rx="1" stroke="#6e6e6e" stroke-width="1.5" fill="none"/></svg>
<div class="t" style="left:1912.13px;top:195.00px;font-size:13.73px;color:#000;transform:rotate(90deg);transform-origin:0 0">Device Manager</div>
<svg style="position:absolute;left:1901px;top:714px;" width="14" height="18" viewBox="0 0 14 18"><path d="M2 0.8 H8.5 C9.3 0.8 9.8 1.3 9.8 2.1 V9 M1.2 2 V14.5 C1.2 15.3 1.7 15.8 2.5 15.8 H6" stroke="#6e6e6e" stroke-width="1.6" fill="none"/><rect x="7.6" y="10.4" width="6" height="4.6" stroke="#6e6e6e" stroke-width="1.2" fill="#f2f2f2"/><rect x="7" y="16" width="7" height="1.2" fill="#6e6e6e"/></svg>
<div class="t" style="left:1911.71px;top:737.00px;font-size:13.24px;color:#000;transform:rotate(90deg);transform-origin:0 0">Emulator</div>
<svg style="position:absolute;left:1902px;top:820px;" width="12" height="17" viewBox="0 0 12 17"><rect x="1" y="1" width="10" height="15" rx="1.5" stroke="#6e6e6e" stroke-width="1.8" fill="none"/><rect x="1" y="12.6" width="10" height="3.4" fill="#6e6e6e"/></svg>
<div class="t" style="left:1911.67px;top:842.00px;font-size:13.19px;color:#000;transform:rotate(90deg);transform-origin:0 0">Device File Explorer</div>
<div style="position:absolute;left:0px;top:976px;width:1920px;height:1px;background:#d1d1d1"></div>
<svg style="position:absolute;left:43px;top:985px;" width="12" height="15" viewBox="0 0 12 15"><circle cx="2.5" cy="2.5" r="2" fill="#6e6e6e"/><circle cx="2.5" cy="12.5" r="2" fill="#6e6e6e"/><circle cx="9.5" cy="5" r="2" fill="#6e6e6e"/><path d="M2.5 2.5 V12.5 C2.5 9 9.5 9 9.5 5" stroke="#6e6e6e" stroke-width="1.6" fill="none"/></svg>
<div class="t" style="left:62.55px;top:986px;font-size:14.5px;color:#000;transform:scaleX(0.9619);transform-origin:0 0;">Version Control</div>
<svg style="position:absolute;left:188px;top:986px;" width="14" height="12" viewBox="0 0 14 12"><path d="M0 1.5 H2 M0 5.5 H2 M0 9.5 H2 M4 1.5 H14 M4 5.5 H14 M4 9.5 H14" stroke="#6e6e6e" stroke-width="2"/></svg>
<div class="t" style="left:207.60px;top:986px;font-size:14.5px;color:#000;transform:scaleX(0.9201);transform-origin:0 0;">TODO</div>
<svg style="position:absolute;left:273px;top:984.5px;" width="14" height="14" viewBox="0 0 14 14"><circle cx="6.8" cy="6.8" r="6.6" fill="#757575"/><rect x="5.7" y="2.8" width="2.2" height="5.6" fill="#f2f2f2"/><rect x="5.7" y="9.6" width="2.2" height="2.2" fill="#f2f2f2"/></svg>
<div class="t" style="left:292.90px;top:986px;font-size:14.5px;color:#000;transform:scaleX(0.9110);transform-origin:0 0;">Problems</div>
<svg style="position:absolute;left:377px;top:985px;" width="15" height="13" viewBox="0 0 15 13"><rect width="14.5" height="12.5" fill="#757575"/><path d="M2.4 2.6 L5.6 5.2 L2.4 7.8" stroke="#f2f2f2" stroke-width="1.3" fill="none"/><path d="M7 9.6 H12" stroke="#f2f2f2" stroke-width="1.3"/></svg>
<div class="t" style="left:397.90px;top:986px;font-size:14.5px;color:#000;transform:scaleX(0.9352);transform-origin:0 0;">Terminal</div>
<svg style="position:absolute;left:474px;top:984.5px;" width="17" height="16" viewBox="0 0 17 16"><path d="M5 4.5 L15 14" stroke="#757575" stroke-width="2.6"/><path d="M0.4 5.2 L5.6 0.6 L8.8 0.8 L7.4 3 L2.6 7.6 Z" fill="#757575"/></svg>
<div class="t" style="left:495.10px;top:986px;font-size:14.5px;color:#000;transform:scaleX(0.8806);transform-origin:0 0;">Build</div>
<svg style="position:absolute;left:551px;top:986.5px;" width="15" height="12" viewBox="0 0 15 12"><path d="M0 1.4 H14 M0 5.6 H9.5 M0 9.8 H12.2" stroke="#757575" stroke-width="2.1"/></svg>
<div class="t" style="left:570.60px;top:986px;font-size:14.5px;color:#000;transform:scaleX(0.9540);transform-origin:0 0;">Logcat</div>
<svg style="position:absolute;left:637px;top:986px;" width="18" height="13" viewBox="0 0 18 13"><path d="M1.6 12.5 A7.2 7.2 0 0 1 12 4.2" stroke="#757575" stroke-width="2.7" fill="none"/><path d="M13.8 5.6 A7.2 7.2 0 0 1 16.4 12.5" stroke="#757575" stroke-width="2.7" fill="none"/><path d="M7.2 12.5 L12.6 5 L9.8 12.5 Z" fill="#757575"/></svg>
<div class="t" style="left:659.20px;top:986px;font-size:14.5px;color:#000;transform:scaleX(0.9286);transform-origin:0 0;">Profiler</div>
<svg style="position:absolute;left:732px;top:984.5px;" width="15" height="16" viewBox="0 0 15 16"><path d="M3.6 6 C3.6 2.5 5 0.8 7.5 0.8 C10 0.8 11.4 2.5 11.4 6 Z" fill="#757575"/><rect x="0.4" y="5.8" width="14.2" height="2.2" fill="#757575"/><path d="M3.8 8.6 H11.2 L12 11.5 H10.4 L11 15.2 H4 L4.6 11.5 H3 Z" fill="#757575"/></svg>
<div class="t" style="left:752.60px;top:986px;font-size:14.5px;color:#000;transform:scaleX(0.9585);transform-origin:0 0;">App Inspection</div>
<svg style="position:absolute;left:1641px;top:984px;" width="18" height="17" viewBox="0 0 18 17"><circle cx="8.5" cy="8.5" r="8.2" fill="#eda200"/><path d="M7 5 L9.5 3.5 V13" stroke="#000" stroke-width="1.5" fill="none"/><rect x="11" y="11" width="7" height="6" fill="#eda200"/></svg>
<div class="t" style="left:1663.90px;top:986px;font-size:14.5px;color:#000;transform:scaleX(0.9149);transform-origin:0 0;">Event Log</div>
<svg style="position:absolute;left:1754px;top:984px;" width="16" height="16" viewBox="0 0 16 16"><path d="M0.5 0.5 H11 M0.5 0.5 V10 M3 3 H12.5 V6 M3 3 V12 H6" stroke="#6e6e6e" stroke-width="1" fill="none"/><circle cx="10" cy="10" r="3" stroke="#6e6e6e" stroke-width="1.5" fill="none"/><path d="M12 12 L15 15" stroke="#6e6e6e" stroke-width="1.8"/></svg>
<div class="t" style="left:1775.00px;top:986px;font-size:14.5px;color:#000;transform:scaleX(0.9622);transform-origin:0 0;">Layout Inspector</div>
<div style="position:absolute;left:0px;top:1004px;width:1920px;height:1px;background:#d5d5d5"></div>
<svg style="position:absolute;left:7px;top:1010px;" width="15" height="15" viewBox="0 0 15 15"><rect x="3.5" y="0.5" width="11" height="11" stroke="#6e6e6e" stroke-width="1" fill="none"/><path d="M1.5 3 V13.5 H12" stroke="#6e6e6e" stroke-width="1" fill="none"/></svg>
<div style="position:absolute;left:0;top:0;width:1600px;height:1030px;overflow:hidden">
<div class="t" style="left:34.10px;top:1009px;font-size:16.25px;color:#000;transform:scaleX(1.0232);transform-origin:0 0;">Project HelloWorld is using the following JDK location when running Gradle: // D:/Android/Android</div>
<div class="t" style="left:755.30px;top:1009px;font-size:16.25px;color:#000;transform:scaleX(1.0578);transform-origin:0 0;">Studio/jre //</div>
<div class="t" style="left:848.30px;top:1009px;font-size:16.25px;color:#000;transform:scaleX(1.0191);transform-origin:0 0;">Using different</div>
<div class="t" style="left:961.00px;top:1009px;font-size:16.25px;color:#000;transform:scaleX(0.9954);transform-origin:0 0;">JDK locations on different processes might cause</div>
<div class="t" style="left:1320.60px;top:1009px;font-size:16.25px;color:#000;transform:scaleX(0.9927);transform-origin:0 0;">Gradle to spawn multi...</div>
<div class="t" style="left:1496.00px;top:1009px;font-size:16.25px;color:#000;transform:scaleX(0.9688);transform-origin:0 0;">(5 minutes agc</div>
</div>
<div class="t" style="left:1640.30px;top:1009px;font-size:16.25px;color:#000;transform:scaleX(0.9443);transform-origin:0 0;">11:21</div>
<div class="t" style="left:1694.80px;top:1009px;font-size:16.25px;color:#000;transform:scaleX(0.7895);transform-origin:0 0;">LF</div>
<div class="t" style="left:1725.90px;top:1009px;font-size:16.25px;color:#000;transform:scaleX(0.9000);transform-origin:0 0;">UTF-8</div>
<div class="t" style="left:1782.90px;top:1009px;font-size:16.25px;color:#000;transform:scaleX(0.9538);transform-origin:0 0;">4 spaces</div>
<svg style="position:absolute;left:1862px;top:1014px;" width="13" height="11" viewBox="0 0 13 11"><rect x="0" y="4" width="11" height="7" fill="#6e6e6e"/><path d="M3 4 V2.5 A2.5 2.5 0 0 1 8 2.5" stroke="#6e6e6e" stroke-width="1.5" fill="none"/></svg>
<svg style="position:absolute;left:1891px;top:1011px;" width="16" height="14" viewBox="0 0 16 14"><rect x="0" y="0" width="16" height="11" rx="1" fill="#6e6e6e"/><path d="M10 11 L14 14 V11 Z" fill="#6e6e6e"/></svg>
<svg style="position:absolute;left:1805px;top:1001.5px;" width="100" height="20" viewBox="0 0 100 20"><path transform="translate(0.0,0)" d="M14 2 L5 4 M4 7.5 H16 M2 11.5 H18 M10 4 V17.5 L8 16.5" stroke="#fff" stroke-width="2.6" fill="none" stroke-linecap="round" opacity="0.75"/><path transform="translate(19.7,0)" d="M2 3 H18 M9.5 3 V18.5 M10.5 8 L14 11" stroke="#fff" stroke-width="2.6" fill="none" stroke-linecap="round" opacity="0.75"/><path transform="translate(39.4,0)" d="M3 2.5 L7 1.8 M3 2.5 V8 L8 7 M5 4.5 L6.5 5.5 M11 2.5 H16.5 V7 L15 8 M13 2.5 L11 8 M4 10 H16 V18 H4 Z M4 14 H16 M10 10 V18" stroke="#fff" stroke-width="2.6" fill="none" stroke-linecap="round" opacity="0.75"/><path transform="translate(59.1,0)" d="M3.5 1.5 L1 6 M2 4.5 H7 M2 8 H6.5 M1.5 11.5 H7 M4.3 8 V17 L7.5 15 M9 4 H17 M10 7 H18.5 M9.5 10 H17 M13.5 1.5 V14 M8.5 2.5 L9.5 9 L8 15 C11 17.5 15 17.5 19 17.5" stroke="#fff" stroke-width="2.6" fill="none" stroke-linecap="round" opacity="0.75"/><path transform="translate(78.8,0)" d="M7 1 L5 3.5 M5 3.5 H15 V10 M5 3.5 V10 M5 6.5 H15 M9 4.5 L10.5 5.5 M7.5 8 L12.5 9 M2.5 12 H17.5 V17.5 M2.5 12 V17.5 M7.5 12 V17.5 M12.5 12 V17.5 M1 18 H19" stroke="#fff" stroke-width="2.6" fill="none" stroke-linecap="round" opacity="0.75"/><path transform="translate(0.0,0)" d="M14 2 L5 4 M4 7.5 H16 M2 11.5 H18 M10 4 V17.5 L8 16.5" stroke="#9d9d9d" stroke-width="1.1" fill="none"/><path transform="translate(19.7,0)" d="M2 3 H18 M9.5 3 V18.5 M10.5 8 L14 11" stroke="#9d9d9d" stroke-width="1.1" fill="none"/><path transform="translate(39.4,0)" d="M3 2.5 L7 1.8 M3 2.5 V8 L8 7 M5 4.5 L6.5 5.5 M11 2.5 H16.5 V7 L15 8 M13 2.5 L11 8 M4 10 H16 V18 H4 Z M4 14 H16 M10 10 V18" stroke="#9d9d9d" stroke-width="1.1" fill="none"/><path transform="translate(59.1,0)" d="M3.5 1.5 L1 6 M2 4.5 H7 M2 8 H6.5 M1.5 11.5 H7 M4.3 8 V17 L7.5 15 M9 4 H17 M10 7 H18.5 M9.5 10 H17 M13.5 1.5 V14 M8.5 2.5 L9.5 9 L8 15 C11 17.5 15 17.5 19 17.5" stroke="#9d9d9d" stroke-width="1.1" fill="none"/><path transform="translate(78.8,0)" d="M7 1 L5 3.5 M5 3.5 H15 V10 M5 3.5 V10 M5 6.5 H15 M9 4.5 L10.5 5.5 M7.5 8 L12.5 9 M2.5 12 H17.5 V17.5 M2.5 12 V17.5 M7.5 12 V17.5 M12.5 12 V17.5 M1 18 H19" stroke="#9d9d9d" stroke-width="1.1" fill="none"/></svg>
<div class="t" style="left:1733.5px;top:1002px;font-size:18.5px;color:#ababab;text-shadow:0 0 1.5px #fff,0 0 1px #fff;transform:scaleX(1.0);transform-origin:0 0">CSDN @</div>
</body></html>
